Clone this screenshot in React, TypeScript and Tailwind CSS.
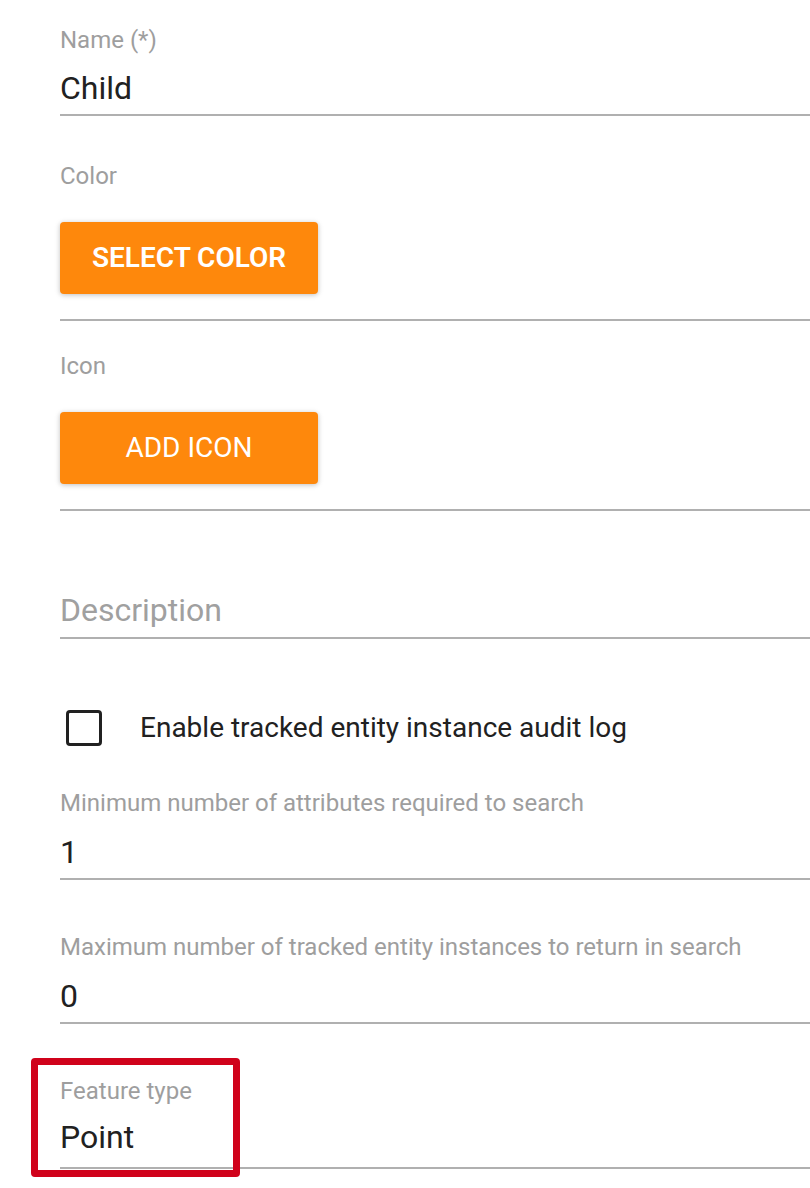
import React from "react";

function Label({ children, className = "" }: { children: React.ReactNode; className?: string }) {
  return (
    <div className={`text-[24px] leading-[24px] text-[#9e9e9e] ${className}`}>{children}</div>
  );
}

function Value({ children, className = "" }: { children: React.ReactNode; className?: string }) {
  return (
    <div className={`text-[32px] leading-[36px] text-[#212121] ${className}`}>{children}</div>
  );
}

function Rule({ className = "" }: { className?: string }) {
  return <div className={`h-[2px] bg-[#b0b0b0] ${className}`} />;
}

function OrangeButton({ children, bold }: { children: React.ReactNode; bold?: boolean }) {
  return (
    <button
      className={`h-[72px] w-[258px] rounded-[4px] bg-[#fe880c] text-[28px] uppercase text-white shadow-[0_1px_6px_rgba(0,0,0,0.14),0_1px_4px_rgba(0,0,0,0.12)] ${
        bold ? "font-semibold" : "font-normal"
      }`}
    >
      {children}
    </button>
  );
}

export default function App() {
  return (
    <div
      className="relative min-h-[1188px] w-[810px] overflow-hidden bg-white pl-[60px]"
      style={{ fontFamily: "Roboto, 'Noto Sans', sans-serif" }}
    >
      <Label className="pt-[28px]">Name (*)</Label>
      <Value className="mt-[18px]">Child</Value>
      <Rule className="mt-[8px]" />

      <Label className="mt-[48px]">Color</Label>
      <div className="mt-[34px]">
        <OrangeButton bold>Select color</OrangeButton>
      </div>
      <Rule className="mt-[25px]" />

      <Label className="mt-[33px]">Icon</Label>
      <div className="mt-[34px]">
        <OrangeButton>Add icon</OrangeButton>
      </div>
      <Rule className="mt-[25px]" />

      <div className="mt-[81px] text-[32px] leading-[36px] text-[#a0a0a0]">Description</div>
      <Rule className="mt-[9px]" />

      <div className="mt-[71px] flex h-[36px] items-center">
        <div className="ml-[6px] h-[36px] w-[36px] rounded-[4px] border-[3.5px] border-[#212121]" />
        <span className="ml-[38px] text-[28px] text-[#212121]">
          Enable tracked entity instance audit log
        </span>
      </div>

      <Label className="mt-[45px]">Minimum number of attributes required to search</Label>
      <Value className="mt-[19px]">1</Value>
      <Rule className="mt-[8px]" />

      <Label className="mt-[55px]">Maximum number of tracked entity instances to return in search</Label>
      <Value className="mt-[19px]">0</Value>
      <Rule className="mt-[8px]" />

      <Label className="mt-[55px]">Feature type</Label>
      <Value className="mt-[16px]">Point</Value>
      <Rule className="mt-[12px]" />

      <div className="pointer-events-none absolute left-[31px] top-[1058px] h-[119px] w-[209px] rounded-[4px] border-[7px] border-[#d0021b]" />
    </div>
  );
}
